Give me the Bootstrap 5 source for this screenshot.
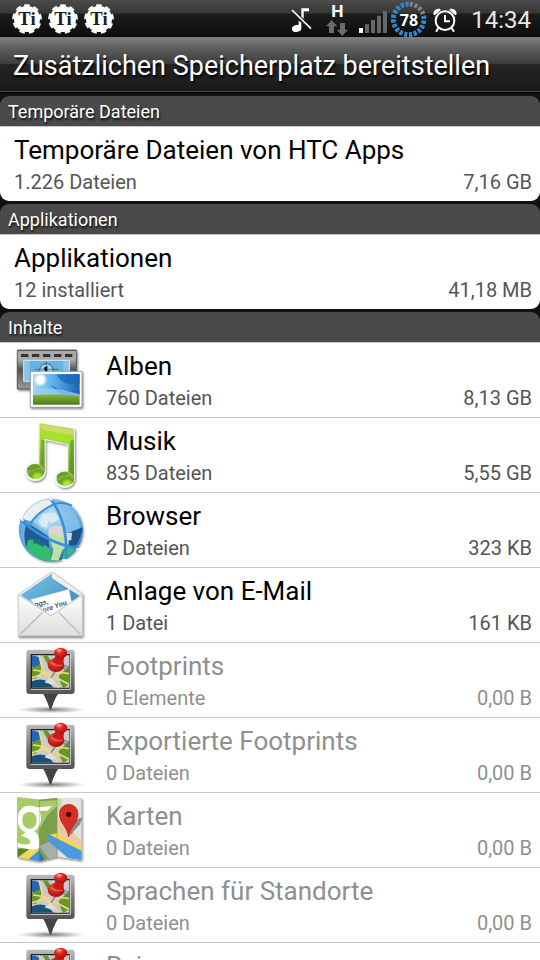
<!DOCTYPE html>
<html lang="de">
<head>
<meta charset="utf-8">
<meta name="viewport" content="width=device-width, initial-scale=1">
<title>Speicherplatz</title>
<link href="https://cdn.jsdelivr.net/npm/bootstrap@5.3.0/dist/css/bootstrap.min.css" rel="stylesheet">
<style>
body { font-family: Roboto, "Liberation Sans", sans-serif; background: #111; }
svg { display: block; flex: none; }
.status-bar { height: 37px; background: linear-gradient(#4c4c4c 0, #363636 36%, #1d1d1d 37%, #0c0c0c 100%); }
.status-clock { font-size: 24px; line-height: 37px; color: #e8e8e8; padding: 2px 9px 0 10px; }
.title-bar { height: 55px; border-top: 1px solid #777; border-bottom: 1px solid #4a4a4a; background: linear-gradient(#7d7d7d 0, #5a5a5a 22%, #3c3c3c 49%, #242424 50%, #191919 100%); }
.title-bar h1 { font-size: 27px; line-height: 56px; padding-left: 13px; color: #fff; text-shadow: 1px 2px 2px #000; }
.groups { padding-top: 3px; border-top: 1px solid #000; gap: 3px; }
.group-head { font-size: 18px; line-height: 32px; height: 30px; padding-top: 1px; color: #fff; background: #4a4a4a; border-radius: 9px 9px 0 0; text-shadow: 1px 2px 2px #111; }
.group-body { border-top: 1px solid #c8c8c8; background: #fff; }
.group-round { border-radius: 0 0 9px 9px; overflow: hidden; }
.entry { height: 74px; color: #000; background: #fff; }
.entry-line { border-bottom: 1px solid #c8c8c8; height: 75px; }
.entry-text { padding: 6px 8px 0 14px; }
.entry-line .entry-text { padding-left: 6px; }
.entry-name { font-size: 26px; line-height: 34px; }
.entry-info { font-size: 20px; line-height: 30px; color: #555; }
.entry-off, .entry-off .entry-info { color: #8f8f8f; }
</style>
<script src="https://cdn.jsdelivr.net/npm/bootstrap@5.3.0/dist/js/bootstrap.bundle.min.js"></script>
</head>
<body>
<svg width="0" height="0" class="position-absolute" aria-hidden="true">
  <defs>
    <linearGradient id="gFrame" x1="0" y1="0" x2="0" y2="1"><stop offset="0" stop-color="#bcbcbc"/><stop offset=".4" stop-color="#777"/><stop offset="1" stop-color="#3c3c3c"/></linearGradient>
    <linearGradient id="gFilm" x1="0" y1="0" x2="0" y2="1"><stop offset="0" stop-color="#777"/><stop offset=".15" stop-color="#c9c9c9"/><stop offset=".5" stop-color="#555"/><stop offset="1" stop-color="#999"/></linearGradient>
    <linearGradient id="gSky" x1="0" y1="0" x2="1" y2="0"><stop offset="0" stop-color="#a4d6f4"/><stop offset=".45" stop-color="#5cb0ea"/><stop offset="1" stop-color="#1b62b4"/></linearGradient>
    <linearGradient id="gGrass" x1="0" y1="0" x2="0" y2="1"><stop offset="0" stop-color="#86b634"/><stop offset="1" stop-color="#4d7d1b"/></linearGradient>
    <linearGradient id="gNote" x1="0" y1="0" x2="0" y2="1"><stop offset="0" stop-color="#b8dc50"/><stop offset=".3" stop-color="#a2de28"/><stop offset=".45" stop-color="#9bc33c"/><stop offset="1" stop-color="#55911f"/></linearGradient>
    <radialGradient id="gHead" cx=".6" cy=".85" r=".75"><stop offset=".2" stop-color="#a6e32a"/><stop offset=".5" stop-color="#6a9e22"/><stop offset="1" stop-color="#a5c45e"/></radialGradient>
    <radialGradient id="gGlobe" cx=".55" cy=".3" r=".75"><stop offset="0" stop-color="#b3dcf6"/><stop offset=".45" stop-color="#74b5e3"/><stop offset="1" stop-color="#1e5c98"/></radialGradient>
    <linearGradient id="gEnv" x1="0" y1="0" x2="0" y2="1"><stop offset="0" stop-color="#fff"/><stop offset="1" stop-color="#dcdcdc"/></linearGradient>
    <linearGradient id="gFlap" x1="0" y1="0" x2="1" y2="1"><stop offset="0" stop-color="#82c4ea"/><stop offset="1" stop-color="#3187bd"/></linearGradient>
    <radialGradient id="gPin" cx=".4" cy=".3" r=".8"><stop offset="0" stop-color="#f26a60"/><stop offset=".4" stop-color="#dc2620"/><stop offset="1" stop-color="#930d0d"/></radialGradient>
    <radialGradient id="gShade"><stop offset="0" stop-color="#555" stop-opacity=".8"/><stop offset="1" stop-color="#777" stop-opacity="0"/></radialGradient>
    <clipPath id="cGlobe"><circle cx="154" cy="120" r="94"/></clipPath>
    <clipPath id="cMap"><path d="M96 46H208V143H96Z"/></clipPath>
    <clipPath id="cFold"><path d="M52 22 118 29 171 24 245 24V211L171 200 118 214 52 202Z"/></clipPath>
    <filter id="soft" x="-20%" y="-20%" width="140%" height="140%"><feDropShadow dx="3" dy="4" stdDeviation="2.5" flood-opacity=".5"/></filter>

    <symbol id="i-gear" viewBox="0 0 108 111">
      <circle cx="45" cy="57" r="39" fill="#fff"/>
      <circle cx="45" cy="57" r="38" fill="none" stroke="#fff" stroke-width="13" stroke-dasharray="15.5 11.03" transform="rotate(-102 45 57)"/>
      <text x="45" y="76" text-anchor="middle" font-family="Liberation Serif, serif" font-weight="700" font-size="56" fill="#1c1c1c">Ti</text>
    </symbol>

    <symbol id="i-albums" viewBox="0 129 300 222">
      <g filter="url(#soft)">
        <path d="M52 151H229V267H52Z" fill="url(#gFilm)" stroke="#555" stroke-width="3"/>
        <path d="M53 153H228V178H53Z" fill="#a9a9a9"/><path d="M53 151H228" stroke="#555" stroke-width="4"/>
        <path d="M63 162H85V171H63ZM96 162H118V171H96ZM129 162H151V171H129ZM162 162H184V171H162ZM195 162H217V171H195Z" fill="#333"/>
        <path d="M71 181H208V244H71Z" fill="#86c6ee" stroke="#d5e7f2" stroke-width="3"/>
        <path d="M90 183H190V220H90Z" fill="#69b1e2"/>
        <circle cx="139" cy="211" r="20" fill="#a9d8f3" stroke="#375d70" stroke-width="3"/>
        <path d="M104 208H175M139 184V220" stroke="#375d70" stroke-width="2"/>
        <path d="M130 204 142 198V220H134V207Z" fill="#111"/>
      </g>
      <g filter="url(#soft)"><path d="M91 214H246V322H91Z" fill="#fff" stroke="#777" stroke-width="2"/></g>
      <path d="M99 222H239V287H99Z" fill="url(#gSky)"/>
      <path d="M170 224C180 246 208 258 239 249V223ZM152 253C180 279 217 274 239 270V282C200 287 166 281 152 253Z" fill="#1967b5" opacity=".75"/>
      <path d="M99 270Q150 255 239 283V288H99Z" fill="#9bd0ef" opacity=".75"/>
      <circle cx="121" cy="239" r="19" fill="#e1f4fc" opacity=".65"/><circle cx="121" cy="239" r="13" fill="#fff"/>
      <path d="M99 285Q160 281 239 287V314H99Z" fill="url(#gGrass)"/>
    </symbol>

    <symbol id="i-music" viewBox="0 9 300 222">
      <g filter="url(#soft)">
        <path d="M119 25 222 42V190A28 26 0 1 1 205 166V87L134 72V170A28 26 0 1 1 118 146Z" fill="#fff" stroke="#f4f4f4" stroke-width="5"/>
      </g>
      <path d="M119 25 222 42V190H205V87L134 72V170H118Z" fill="url(#gNote)"/>
      <path d="M121 28 220 45V60L121 41Z" fill="#cfd968"/>
      <path d="M120 54 216 73V84L132 67Z" fill="#a1e729"/>
      <path d="M132 34 213 48M132 45 213 59" stroke="#f0d982" stroke-width="2" stroke-dasharray="3 6"/>
      <path d="M212 76H221V188H209Z" fill="#58951f" opacity=".75"/>
      <path d="M124 75H133V163H124Z" fill="#5f9923" opacity=".65"/>
      <ellipse cx="107" cy="169" rx="27" ry="23" fill="url(#gHead)"/><ellipse cx="196" cy="191" rx="27" ry="22" fill="url(#gHead)"/>
      <path d="M81 160Q90 145 112 148L124 158Q100 158 83 169ZM170 182Q181 168 202 172L211 178Q188 179 173 191Z" fill="#5b8c22" opacity=".75"/>
    </symbol>

    <symbol id="i-globe" viewBox="0 9 300 222">
      <g filter="url(#soft)"><circle cx="154" cy="120" r="94" fill="url(#gGlobe)"/></g>
      <g clip-path="url(#cGlobe)">
        <path d="M63 85C68 53 100 26 150 24L160 41 145 57 121 67 92 94Z" fill="#eceeed"/>
        <path d="M112 76 94 92 138 122 168 92 164 48Z" fill="#b9def3" opacity=".6"/>
        <path d="M128 73 165 67 178 88 157 98 147 93 139 113 124 108 115 93Z" fill="#dcebed"/>
        <path d="M58 98 96 107 145 139 148 175 126 194 90 186 65 161Z" fill="#1f5b94"/>
        <path d="M58 98 80 102Q66 130 80 180L65 161Z" fill="#68aee0"/>
        <path d="M84 150Q104 145 122 155L147 174 160 213H119Q90 200 78 176Z" fill="#35bb70"/>
        <path d="M100 147Q122 144 140 162L128 170Q112 160 100 160Z" fill="#1f6a8c"/>
        <path d="M207 128 250 111 240 166 207 167Z" fill="#1c5289"/>
        <path d="M145 117Q162 100 188 111L198 130 216 128 214 150 191 155 145 136Z" fill="#d9d7cf"/>
        <path d="M146 135 194 137 207 158 187 181 175 213 153 210 160 180Z" fill="#bfe0a6"/>
        <path d="M197 172 237 174 219 205 184 213Z" fill="#38bd76"/>
        <path d="M178 40Q229 56 241 112L198 129Q196 75 171 38Z" fill="#82bfe9" opacity=".8"/>
      </g>
      <g fill="none" stroke="#3790dc" stroke-width="8" stroke-linecap="round">
        <path d="M62 87Q125 153 235 177"/><path d="M150 25Q205 91 198 205"/>
        <path d="M92 100Q112 66 165 41Q192 36 214 46" stroke-width="6"/>
        <path d="M62 95A94 94 0 0 0 104 200" stroke="#62a8e2" stroke-width="5"/>
        <path d="M70 78A94 94 0 0 1 144 27" stroke="#a8d0f0" stroke-width="3"/><path d="M196 208Q234 181 246 130" stroke-width="4"/>
      </g>
      <path d="M59 83 68 91M145 21 155 29M231 178H239M189 211H201" stroke="#fff" stroke-width="6" stroke-linecap="round"/>
    </symbol>

    <symbol id="i-mail" viewBox="0 9 300 222">
      <g filter="url(#soft)"><path d="M55 88 150 24 159 23 247 87V214H55Z" fill="#f3f3f3" stroke="#bbb" stroke-width="2"/></g>
      <path d="M62 90 154 27 241 89 154 151Z" fill="url(#gFlap)"/>
      <path d="M156 27 241 89V105L211 78 156 39Z" fill="#f1f1f1"/>
      <path d="M160 44 239 92 219 111 200 76Z" fill="#4795c8"/>
      <path d="M91 104 207 73 215 115 154 153 105 118Z" fill="#fff" stroke="#ddd"/>
      <g font-family="Liberation Sans, sans-serif" font-style="italic" font-weight="700" font-size="21" fill="#555">
        <text transform="translate(105 127) rotate(-15)">ogs,</text>
        <text transform="translate(130 143) rotate(-19)">ore You</text>
      </g>
      <path d="M56 89 153 151 246 89V214H56Z" fill="url(#gEnv)" stroke="#d2d2d2" stroke-width="2"/>
      <path d="M61 208 128 142M241 208 176 142" stroke="#bdbdbd" stroke-width="4"/>
      <path d="M57 91 153 153 246 91" fill="none" stroke="#bbb" stroke-width="2"/>
      <path d="M56 214H247" stroke="#999" stroke-width="3"/>
    </symbol>

    <symbol id="i-pin" viewBox="0 9 300 222">
      <ellipse cx="154" cy="209" rx="102" ry="11" fill="url(#gShade)"/>
      <path d="M87 29H216Q224 29 224 37V153Q224 162 214 162H174Q165 171 153 208H150Q137 171 130 162H88Q79 162 79 153V37Q79 29 87 29Z" fill="url(#gFrame)"/>
      <path d="M130 162H174Q164 175 153 208H150Q139 175 130 162Z" fill="#444"/>
      <path d="M92 42H211V148H92Z" fill="#222"/><path d="M92 148H211V42" fill="none" stroke="#ddd" stroke-width="3"/>
      <g clip-path="url(#cMap)">
        <path d="M95 45H210V145H95Z" fill="#c9caca"/>
        <path d="M96 46 116 51 122 80 103 86 96 80Z" fill="#2166b7"/>
        <path d="M96 84 120 72 126 90 108 116 96 116ZM128 46H142L160 74 149 85ZM176 108 208 78V131L190 145 182 130Z" fill="#65982a"/>
        <path d="M96 124Q126 111 148 128L162 145H96Z" fill="#1b5079"/>
        <g fill="none" stroke="#f3d97b" stroke-width="5"><path d="M117 46Q129 82 126 103 107 111 96 113M99 90Q124 91 151 104L207 133M126 94Q143 116 152 109 169 93 207 101M151 112 176 145"/></g>
        <path d="M133 127 150 114 167 128 158 135Z" fill="#dedede"/>
      </g>
      <path d="M168 91 153 113" stroke="#777" stroke-width="4"/>
      <path d="M190 84 208 95M183 75 208 82" stroke="#666" stroke-width="7" opacity=".5"/>
      <ellipse cx="168" cy="75" rx="25" ry="21" fill="url(#gPin)"/>
      <path d="M168 46H193L190 69Q173 78 157 65Z" fill="#c61b18"/>
      <ellipse cx="182" cy="39" rx="20" ry="16" fill="url(#gPin)"/>
      <path d="M151 67Q169 83 188 75" fill="none" stroke="#f06b5f" stroke-width="3"/>
      <ellipse cx="177" cy="31" rx="8" ry="4" fill="#ffa198" opacity=".7"/>
    </symbol>

    <symbol id="i-maps" viewBox="0 9 300 222">
      <g filter="url(#soft)"><path d="M52 22 118 29 171 24 245 24V211L171 200 118 214 52 202Z" fill="#9dbc5d"/></g>
      <g clip-path="url(#cFold)">
        <path d="M50 20H118V216H50Z" fill="#a8cc64"/><path d="M118 20H172V216H118Z" fill="#7ca04a"/>
        <path d="M172 20H248V216H172Z" fill="#e4e2db"/>
        <path d="M118 120Q138 70 171 50V30L118 34Z" fill="#a9c869"/>
        <path d="M172 84 247 154V178L172 140Z" fill="#e6caa9"/>
        <path d="M171 24 186 29 179 57 171 64Z" fill="#c2d99c"/>
        <path d="M52 202 112 162 118 214Z" fill="#f5d758"/><path d="M52 176 91 175 52 203Z" fill="#54832b"/>
        <path d="M83 209 118 180V215Z" fill="#4596d4"/>
        <path d="M118 183 137 215H118Z" fill="#2b73b7"/><path d="M118 168 148 155 172 175V201L146 207Z" fill="#a7adb1"/>
        <path d="M143 136 172 131 248 183V211L205 205 147 156Z" fill="#4b9bdc"/>
        <path d="M149 134 171 130 248 173V184Z" fill="#f7d74d"/>
        <path fill-rule="evenodd" d="M88 47C102 47 108 52 116 52L156 48 142 62H118C126 82 126 110 102 124 118 134 120 150 117 174 105 182 85 177 52 172V158C72 165 90 166 91 156 91 146 75 140 62 138 70 133 76 128 76 126 60 120 53 106 53 87 54 61 68 47 88 47ZM88 66C75 66 67 75 67 90 67 106 76 116 89 116 102 116 110 106 110 90 110 75 102 66 88 66Z" fill="#fff"/>
      </g>
      <path d="M118 29V214M171 24V200" stroke="#678149" stroke-width="2" opacity=".5"/>
      <path d="M208 139 240 103 247 82 220 92Z" fill="#333" opacity=".5"/>
      <path d="M206 141C202 110 178 99 178 71A28 28 0 0 1 234 71C234 99 210 110 206 141Z" fill="#d92e22" stroke="#ae2118" stroke-width="2"/>
      <circle cx="206" cy="73" r="8" fill="#421111"/>
    </symbol>
  </defs>
</svg>

<div class="vh-100 d-flex flex-column overflow-hidden">
  <div class="status-bar d-flex align-items-start flex-shrink-0">
    <div class="d-flex ps-2 ms-1" aria-hidden="true">
      <svg width="36" height="37"><use href="#i-gear"/></svg>
      <svg width="36" height="37"><use href="#i-gear"/></svg>
      <svg width="36" height="37"><use href="#i-gear"/></svg>
    </div>
    <div class="d-flex ms-auto">
      <svg width="28" height="37" viewBox="24 0 84 111" role="img" aria-label="Stumm">
        <path d="M30 30 87 86" stroke="#fff" stroke-width="5"/>
        <path d="M58 50V25H81V34H65V56ZM50 62 58 68V88Q54 97 38 96 29 93 30 84 32 75 50 74Z" fill="#fff"/>
      </svg>
      <svg width="36" height="37" viewBox="108 0 108 111" role="img" aria-label="HSPA">
        <text x="166" y="50" text-anchor="middle" font-family="Roboto, sans-serif" font-weight="700" font-size="52" fill="#fff">H</text>
        <path d="M149 60 166 79H156V99H141V79H132ZM181 108 198 89H189V69H174V89H164Z" fill="#6b6b6b"/>
      </svg>
      <svg width="35" height="37" viewBox="216 0 105 111" role="img" aria-label="Signal">
        <path d="M231 84H243V99H231Z" fill="#fff"/>
        <path d="M249 73H261V99H249ZM267 60H279V99H267ZM285 47H297V99H285ZM303 33H315V99H303Z" fill="#666"/>
      </svg>
      <svg width="40" height="37" viewBox="321 0 120 111" role="img" aria-label="Akku 78 %">
        <circle cx="380" cy="58" r="46" fill="none" stroke="#858585" stroke-width="14" pathLength="100" stroke-dasharray="3 2" transform="rotate(-85 380 58)"/>
        <circle cx="380" cy="58" r="46" fill="none" stroke="#2489d8" stroke-width="14" pathLength="100" stroke-dasharray="3 2 3 2 3 2 3 2 3 2 3 2 3 2 3 2 3 2 3 2 3 2 3 2 3 2 3 2 3 2 3 22" transform="rotate(-13 380 58)"/>
        <text x="381" y="78" text-anchor="middle" font-family="Open Sans, sans-serif" font-weight="700" font-size="48" fill="#fff">78</text>
      </svg>
      <svg width="32" height="37" viewBox="441 0 96 111" role="img" aria-label="Wecker">
        <circle cx="489" cy="62" r="28" fill="none" stroke="#fff" stroke-width="6"/>
        <path d="M489 45V64H504M469 84 462 95M509 84 516 95" fill="none" stroke="#fff" stroke-width="6"/>
        <path d="M454 43Q454 25 474 26L476 30 458 46ZM524 43Q524 25 504 26L502 30 520 46Z" fill="#fff"/>
      </svg>
      <div class="status-clock">14:34</div>
    </div>
  </div>

  <header class="title-bar flex-shrink-0 overflow-hidden">
    <h1 class="m-0 fw-normal text-nowrap">Zusätzlichen Speicherplatz bereitstellen</h1>
  </header>

  <main class="groups d-flex flex-column overflow-hidden">
    <section class="flex-shrink-0">
      <h2 class="group-head m-0 px-2 pt-0 fw-normal">Temporäre Dateien</h2>
      <div class="group-body group-round">
        <a href="#" class="entry d-block text-decoration-none">
          <div class="entry-text"><div class="entry-name">Temporäre Dateien von HTC Apps</div>
          <div class="entry-info d-flex justify-content-between"><span>1.226 Dateien</span><span>7,16 GB</span></div></div>
        </a>
      </div>
    </section>
    <section class="flex-shrink-0">
      <h2 class="group-head m-0 px-2 pt-0 fw-normal">Applikationen</h2>
      <div class="group-body group-round">
        <a href="#" class="entry d-block text-decoration-none">
          <div class="entry-text"><div class="entry-name">Applikationen</div>
          <div class="entry-info d-flex justify-content-between"><span>12 installiert</span><span>41,18 MB</span></div></div>
        </a>
      </div>
    </section>
    <section class="flex-shrink-0">
      <h2 class="group-head m-0 px-2 pt-0 fw-normal">Inhalte</h2>
      <div class="group-body">
        <a href="#" class="entry entry-line d-flex text-decoration-none"><svg width="100" height="74" aria-hidden="true"><use href="#i-albums"/></svg>
          <div class="entry-text flex-grow-1"><div class="entry-name">Alben</div><div class="entry-info d-flex justify-content-between"><span>760 Dateien</span><span>8,13 GB</span></div></div></a>
        <a href="#" class="entry entry-line d-flex text-decoration-none"><svg width="100" height="74" aria-hidden="true"><use href="#i-music"/></svg>
          <div class="entry-text flex-grow-1"><div class="entry-name">Musik</div><div class="entry-info d-flex justify-content-between"><span>835 Dateien</span><span>5,55 GB</span></div></div></a>
        <a href="#" class="entry entry-line d-flex text-decoration-none"><svg width="100" height="74" aria-hidden="true"><use href="#i-globe"/></svg>
          <div class="entry-text flex-grow-1"><div class="entry-name">Browser</div><div class="entry-info d-flex justify-content-between"><span>2 Dateien</span><span>323 KB</span></div></div></a>
        <a href="#" class="entry entry-line d-flex text-decoration-none"><svg width="100" height="74" aria-hidden="true"><use href="#i-mail"/></svg>
          <div class="entry-text flex-grow-1"><div class="entry-name">Anlage von E-Mail</div><div class="entry-info d-flex justify-content-between"><span>1 Datei</span><span>161 KB</span></div></div></a>
        <a href="#" class="entry entry-line entry-off d-flex text-decoration-none"><svg width="100" height="74" aria-hidden="true"><use href="#i-pin"/></svg>
          <div class="entry-text flex-grow-1"><div class="entry-name">Footprints</div><div class="entry-info d-flex justify-content-between"><span>0 Elemente</span><span>0,00 B</span></div></div></a>
        <a href="#" class="entry entry-line entry-off d-flex text-decoration-none"><svg width="100" height="74" aria-hidden="true"><use href="#i-pin"/></svg>
          <div class="entry-text flex-grow-1"><div class="entry-name">Exportierte Footprints</div><div class="entry-info d-flex justify-content-between"><span>0 Dateien</span><span>0,00 B</span></div></div></a>
        <a href="#" class="entry entry-line entry-off d-flex text-decoration-none"><svg width="100" height="74" aria-hidden="true"><use href="#i-maps"/></svg>
          <div class="entry-text flex-grow-1"><div class="entry-name">Karten</div><div class="entry-info d-flex justify-content-between"><span>0 Dateien</span><span>0,00 B</span></div></div></a>
        <a href="#" class="entry entry-line entry-off d-flex text-decoration-none"><svg width="100" height="74" aria-hidden="true"><use href="#i-pin"/></svg>
          <div class="entry-text flex-grow-1"><div class="entry-name">Sprachen für Standorte</div><div class="entry-info d-flex justify-content-between"><span>0 Dateien</span><span>0,00 B</span></div></div></a>
        <a href="#" class="entry entry-line entry-off d-flex text-decoration-none"><svg width="100" height="74" aria-hidden="true"><use href="#i-pin"/></svg>
          <div class="entry-text flex-grow-1"><div class="entry-name">Reisen</div></div></a>
      </div>
    </section>
  </main>
</div>
</body>
</html>
